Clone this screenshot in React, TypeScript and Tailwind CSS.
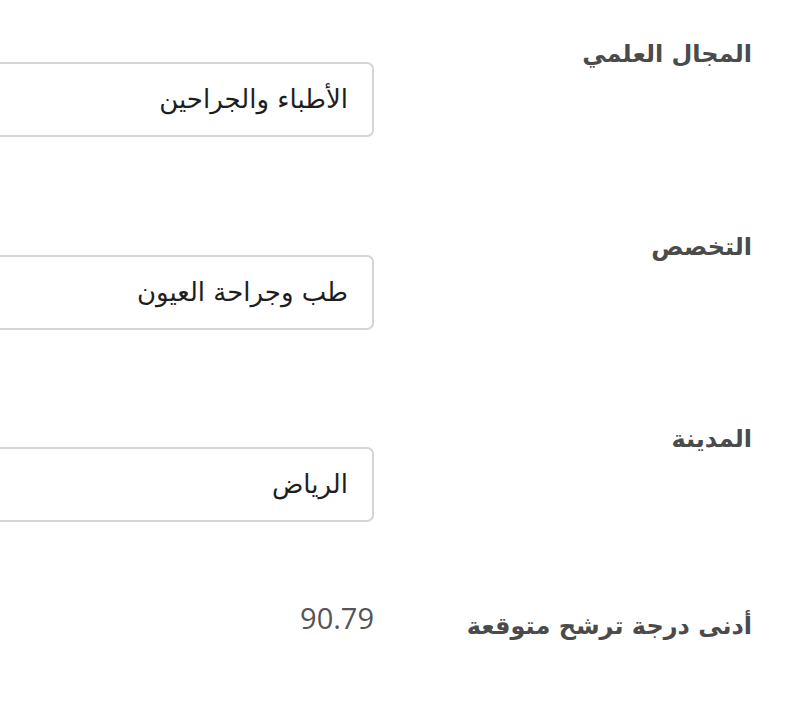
import React from "react";

const labelCls =
  "w-[378px] shrink-0 text-right font-bold text-[24px] leading-[30px] text-[#4b4b4b]";
const inputCls =
  "w-[440px] shrink-0 h-[75px] border-2 border-[#d4d4d4] rounded-[7px] bg-white flex items-center pr-[24px] text-[26px] text-[#1e1e1e]";

export default function App() {
  return (
    <div
      dir="rtl"
      className="w-[792px] h-[702px] overflow-hidden bg-white pr-[40px]"
      style={{ fontFamily: '"DejaVu Sans", sans-serif' }}
    >
      <div className="pt-[39px]">
        <div className="flex items-start">
          <div className={labelCls}>المجال العلمي</div>
          <div className={inputCls + " mt-[23px]"}>الأطباء والجراحين</div>
        </div>
        <div className="flex items-start mt-[95px]">
          <div className={labelCls}>التخصص</div>
          <div className={inputCls + " mt-[23px]"}>طب وجراحة العيون</div>
        </div>
        <div className="flex items-start mt-[94px]">
          <div className={labelCls}>المدينة</div>
          <div className={inputCls + " mt-[23px]"}>الرياض</div>
        </div>
        <div className="flex items-start mt-[78px]">
          <div className={labelCls + " pt-[11px]"}>أدنى درجة ترشح متوقعة</div>
          <div
            className="w-[440px] shrink-0 text-right text-[29px] leading-[36px] text-[#555555]"
            style={{ fontFamily: '"Open Sans", sans-serif' }}
          >
            90.79
          </div>
        </div>
      </div>
    </div>
  );
}
